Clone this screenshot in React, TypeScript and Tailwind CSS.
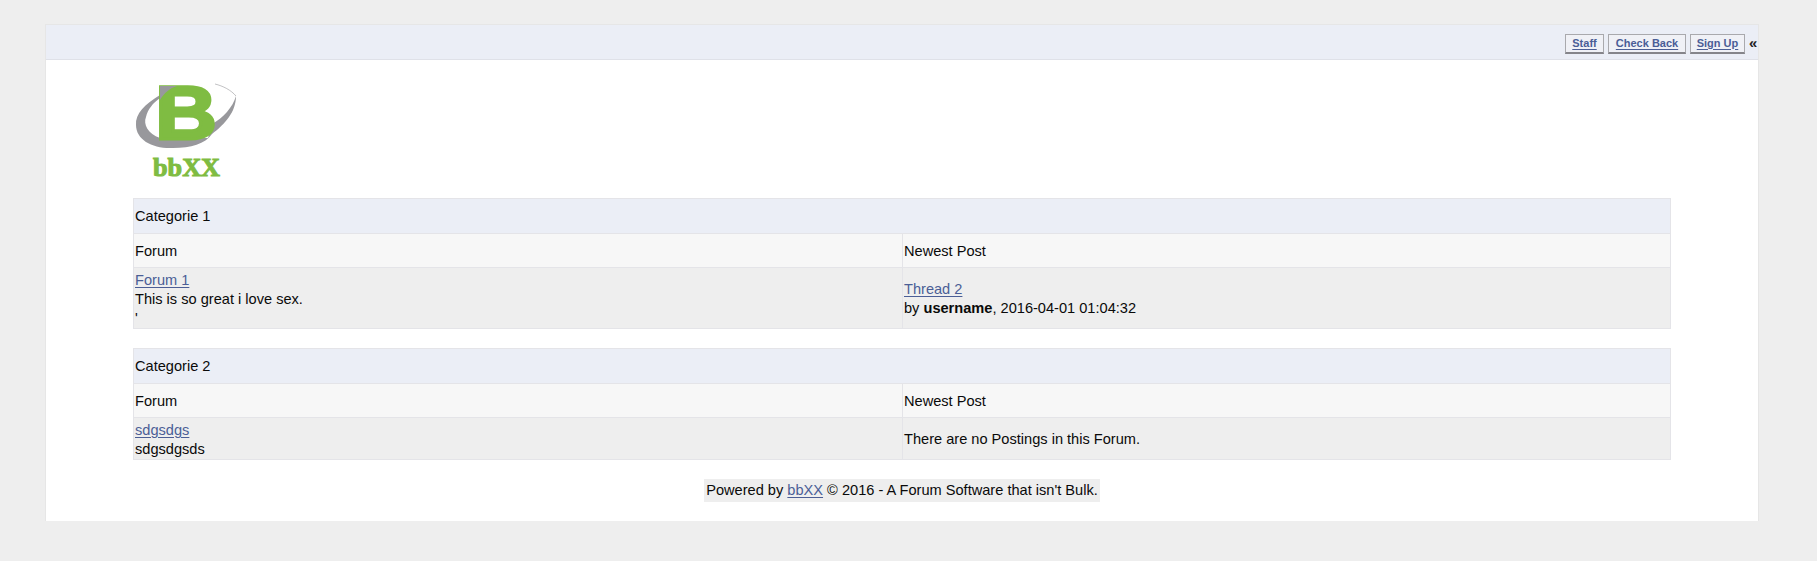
const LINK = "text-[#4b5e96] underline underline-offset-2";
const GREEN = "#7fbc42";
const GREY = "#98989c";

function Logo() {
  return (
    <svg width="120" height="134" viewBox="0 0 120 134" className="block">
      {/* swoosh behind the letter, stays out of the counters */}
      <path
        d="M27 33 C12 42 2 52 3 63 C3 78 20 87 40 86 C58 86 72 82 79 72 C92 62 103 50 103 34 C100 45 90 56 79 62 L75 76 L27 76 C15 72 10 62 13 55 C15 47 20 41 27 36 Z"
        fill={GREY}
      />
      <path d="M82 22 C90 24 98 28 103 34" fill="none" stroke={GREY} strokeWidth="0.6" />
      <text
        transform="translate(22 77) scale(1.13 1)"
        fontFamily="'Liberation Sans', Arial, sans-serif"
        fontWeight="700"
        fontSize="76"
        fill={GREEN}
        stroke={GREEN}
        strokeWidth="3"
      >
        B
      </text>
      {/* grey corner on top of the letter */}
      <path d="M27 24 L44 24 C37 26 31 31 27 38 Z" fill={GREY} />
      <text
        x="20"
        y="114"
        textLength="67"
        lengthAdjust="spacingAndGlyphs"
        fontFamily="'Liberation Serif', serif"
        fontWeight="700"
        fontSize="25"
        fill={GREEN}
        stroke={GREEN}
        strokeWidth="1"
      >
        bbXX
      </text>
    </svg>
  );
}

function NavButton({ label, width }: { label: string; width: string }) {
  return (
    <a
      href="#"
      className={`block h-5 text-center border border-[#a9a9ad] border-b-2 border-b-[#85858a] bg-[#f0f1f6] text-[11px] leading-[17px] font-bold ${width} ${LINK}`}
    >
      {label}
    </a>
  );
}

function Category({
  title,
  children,
  newest,
}: {
  title: string;
  children: React.ReactNode;
  newest: React.ReactNode;
}) {
  return (
    <div className="border border-[#e4e4e8] mb-[19px]">
      <div className="h-[35px] flex items-center px-px pt-px bg-[#ebeef6] border-b border-[#e4e4e8]">{title}</div>
      <div className="flex h-[34px] bg-[#f7f7f7] border-b border-[#e4e4e8]">
        <div className="w-1/2 flex items-center px-px pt-px">Forum</div>
        <div className="w-1/2 flex items-center px-px pt-px border-l border-[#e4e4e8]">Newest Post</div>
      </div>
      <div className="flex bg-[#eeeeee]">
        <div className="w-1/2 px-px pt-[3px]">{children}</div>
        <div className="w-1/2 px-px pt-px border-l border-[#e4e4e8] flex flex-col justify-center">{newest}</div>
      </div>
    </div>
  );
}

export default function App() {
  return (
    <div className="min-h-[561px] bg-[#eeeeee] pt-6 font-['Liberation_Sans',Arial,sans-serif] text-[14.6px] leading-[19px] text-[#0a0a0a]">
      <div className="w-[1714px] ml-[45px] bg-white border border-[#e6e6e6] border-b-0">
        {/* Top bar */}
        <div className="h-[35px] bg-[#ebeef6] border-b border-[#dfe1e8] flex items-center justify-end gap-[4px] pt-[3px]">
          <NavButton label="Staff" width="w-[39px]" />
          <NavButton label="Check Back" width="w-[78px]" />
          <NavButton label="Sign Up" width="w-[55px]" />
          <span className="text-[15px] leading-none font-bold text-[#222] mb-[3px] w-[9px]">«</span>
        </div>

        <div className="px-[87px] pt-[2px]">
          <div className="h-[136px]">
            <Logo />
          </div>

          <Category
            title="Categorie 1"
            newest={
              <>
                <a href="#" className={LINK}>Thread 2</a>
                <span>
                  by <b>username</b>, 2016-04-01 01:04:32
                </span>
              </>
            }
          >
            <a href="#" className={`${LINK} block`}>Forum 1</a>
            <div>This is so great i love sex.</div>
            <div>'</div>
          </Category>

          <Category
            title="Categorie 2"
            newest={<span>There are no Postings in this Forum.</span>}
          >
            <a href="#" className={`${LINK} block`}>sdgsdgs</a>
            <div>sdgsdgsds</div>
          </Category>

          {/* Footer */}
          <div className="flex justify-center mt-px pb-[19px]">
            <div className="h-[23px] px-[2px] flex items-center bg-[#eeeeee] whitespace-pre">
              Powered by <a href="#" className={LINK}>bbXX</a> © 2016 - A Forum Software that isn't Bulk.
            </div>
          </div>
        </div>
      </div>
    </div>
  );
}
